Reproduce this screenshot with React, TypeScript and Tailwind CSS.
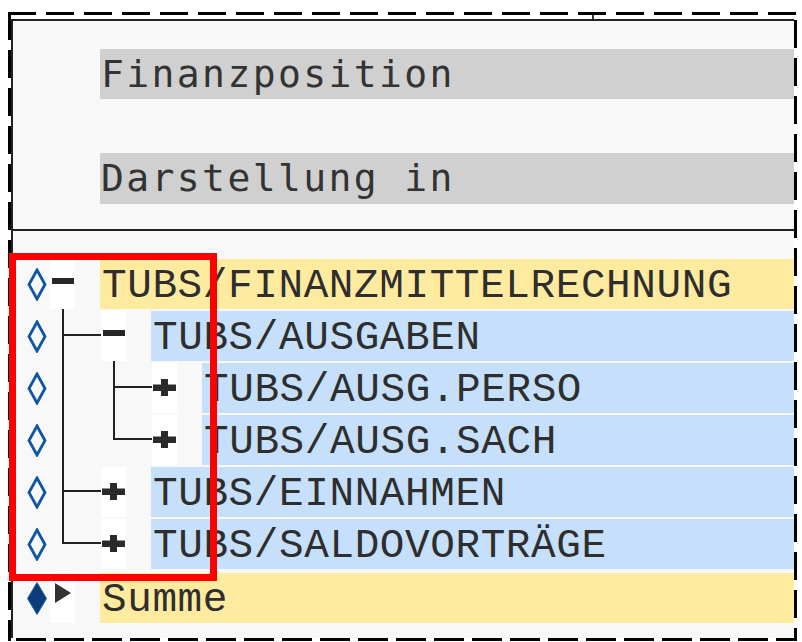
import React from "react";

type LineKind = "pipe" | "tee" | "elbow" | "none";
type Row = {
  level: number;
  icon: "minus" | "plus" | "triangle";
  text: string;
  color: "yellow" | "blue";
  lines: LineKind[];
  filled?: boolean;
};

const rows: Row[] = [
  { level: 0, icon: "minus", text: "TUBS/FINANZMITTELRECHNUNG", color: "yellow", lines: [] },
  { level: 1, icon: "minus", text: "TUBS/AUSGABEN", color: "blue", lines: ["tee"] },
  { level: 2, icon: "plus", text: "TUBS/AUSG.PERSO", color: "blue", lines: ["pipe", "tee"] },
  { level: 2, icon: "plus", text: "TUBS/AUSG.SACH", color: "blue", lines: ["pipe", "elbow"] },
  { level: 1, icon: "plus", text: "TUBS/EINNAHMEN", color: "blue", lines: ["tee"] },
  { level: 1, icon: "plus", text: "TUBS/SALDOVORTRÄGE", color: "blue", lines: ["elbow"] },
];

function Connector({ kind }: { kind: LineKind }) {
  return (
    <svg width="51" height="52" viewBox="0 0 51 52" className="shrink-0 block">
      {kind === "pipe" && <rect x="12" y="0" width="2" height="52" fill="#222" />}
      {kind === "tee" && (
        <>
          <rect x="12" y="0" width="2" height="52" fill="#222" />
          <rect x="12" y="25" width="39" height="2" fill="#222" />
        </>
      )}
      {kind === "elbow" && (
        <>
          <rect x="12" y="0" width="2" height="27" fill="#222" />
          <rect x="12" y="25" width="39" height="2" fill="#222" />
        </>
      )}
    </svg>
  );
}

function Diamond({ filled }: { filled?: boolean }) {
  return (
    <svg width="20" height="33" viewBox="0 0 20 33" className="block">
      {filled ? (
        <polygon points="10,0.5 19.5,16.5 10,32.5 0.5,16.5" fill="#0b3b78" stroke="#1a5fb0" strokeWidth="1" />
      ) : (
        <polygon points="10,2 18,16.5 10,31 2,16.5" fill="none" stroke="#0d56a6" strokeWidth="2.8" />
      )}
    </svg>
  );
}

function Icon({ kind }: { kind: Row["icon"] }) {
  if (kind === "minus") {
    return (
      <div className="pt-[19px] pl-[2px]">
        <div className="w-[22px] h-[6px] bg-[#262626]" />
      </div>
    );
  }
  if (kind === "plus") {
    return (
      <div className="pt-[16px] pl-[1px]">
        <svg width="23" height="17" viewBox="0 0 23 17" className="block">
          <rect x="0" y="5.5" width="23" height="6.5" fill="#2a2a2a" />
          <rect x="8" y="0" width="7" height="17" fill="#2a2a2a" />
        </svg>
      </div>
    );
  }
  return (
    <div className="pt-[10px] pl-[5px]">
      <svg width="16" height="20" viewBox="0 0 16 20" className="block">
        <polygon points="0,0 16,10 0,20" fill="#333" />
      </svg>
    </div>
  );
}

function TreeRow({ row, extraTop }: { row: Row; extraTop?: boolean }) {
  const band = row.color === "yellow" ? "bg-[#feeb9f]" : "bg-[#c6e0fb]";
  return (
    <div className={`flex h-[52px] ${extraTop ? "mt-[2px]" : ""}`}>
      <div className="w-[37px] shrink-0 pl-[14px] pt-[11px]">
        <Diamond filled={row.filled} />
      </div>
      {row.lines.map((l, i) => (
        <Connector key={i} kind={l} />
      ))}
      <div className="w-[25px] shrink-0 mt-[2px] h-[50px] bg-white">
        <Icon kind={row.icon} />
      </div>
      <div className="w-[25px] shrink-0" />
      <div
        className={`flex-1 mt-[2px] h-[50px] ${band} pl-[2px] text-[41px] leading-[54px] tracking-[0.6px] text-[#2e2e2e] whitespace-nowrap overflow-hidden`}
        style={{ fontFamily: '"Liberation Mono", monospace' }}
      >
        {row.text}
      </div>
    </div>
  );
}

export default function App() {
  return (
    <div className="relative w-[802px] h-[642px] bg-white overflow-hidden">
      <div className="relative ml-[8px] mt-[12px] w-[789px] h-[629px] p-[3px] flex flex-col">
        <div className="h-[4px] shrink-0 flex">
          <div className="ml-[581px] w-[1.5px] h-[4px] bg-[#333]" />
        </div>
        <div className="flex-1 border-t-2 border-l-2 border-[#222] bg-[#f8f8f8] flex flex-col">
          <div
            className="h-[208px] pl-[87px] pt-[28px] text-[38px] leading-[50px] tracking-[2.4px] text-[#333]"
            style={{ fontFamily: '"DejaVu Sans Mono", monospace' }}
          >
            <div className="h-[50px] bg-[#d0d0d0] pl-[1px] whitespace-nowrap">Finanzposition</div>
            <div className="mt-[54px] h-[51px] bg-[#d0d0d0] pl-[1px] whitespace-nowrap">Darstellung in</div>
          </div>
          <div className="h-[2px] bg-[#222]" />
          <div className="pt-[26px] flex flex-col">
            {rows.map((r, i) => (
              <TreeRow key={i} row={r} />
            ))}
            <TreeRow
              extraTop
              row={{ level: 0, icon: "triangle", text: "Summe", color: "yellow", lines: [], filled: true }}
            />
          </div>
        </div>
        <svg
          className="absolute inset-0 pointer-events-none"
          width="789"
          height="629"
          viewBox="0 0 789 629"
        >
          <line x1="0" y1="1.5" x2="789" y2="1.5" stroke="#000" strokeWidth="3" strokeDasharray="28 10" />
          <line x1="1.5" y1="0" x2="1.5" y2="629" stroke="#000" strokeWidth="3" strokeDasharray="28 10" />
          <line x1="787.5" y1="0" x2="787.5" y2="629" stroke="#000" strokeWidth="3" strokeDasharray="28 10" strokeDashoffset="-8" />
          <line x1="0" y1="627.5" x2="789" y2="627.5" stroke="#000" strokeWidth="3" strokeDasharray="30 8" strokeDashoffset="-8" />
        </svg>
      </div>
      <div className="absolute left-[9px] top-[253px] w-[208px] h-[328px] border-[7px] border-[#ff0000] pointer-events-none" />
    </div>
  );
}
